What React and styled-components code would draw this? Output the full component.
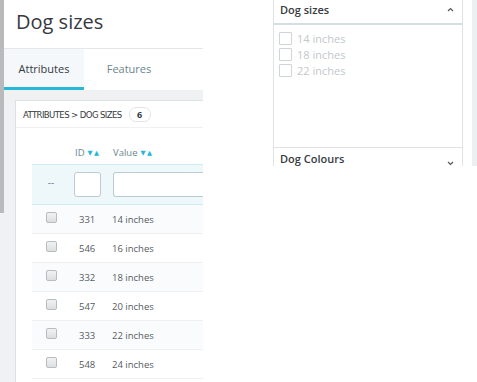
import React from 'react';
import styled, { createGlobalStyle } from 'styled-components';

const GlobalStyle = createGlobalStyle`
  html, body {
    margin: 0;
    padding: 0;
    background: #ffffff;
  }
  body {
    font-family: "Open Sans", "Liberation Sans", sans-serif;
    color: #363a41;
  }
`

const Page = styled.div`
  display: flex;
  align-items: flex-start;
  width: 477px;
  height: 382px;
  overflow: hidden;
`

const LeftPanel = styled.div`
  display: flex;
  width: 203px;
  height: 382px;
  overflow: hidden;
  background: #eff1f2;
`

const Edge = styled.div`
  width: 4px;
  flex-shrink: 0;
  display: flex;
  flex-direction: column;
`

const EdgeDark = styled.div`
  height: 213px;
  background: #b9babb;
`

const Main = styled.div`
  flex: 1;
  display: flex;
  flex-direction: column;
  min-width: 0;
`

const Header = styled.div`
  height: 48px;
  background: #fff;
  border-bottom: 1px solid #e4e6e8;
  padding-left: 12px;
  display: flex;
  align-items: center;
`

const Title = styled.h1`
  margin: 0;
  font-size: 20px;
  font-weight: 400;
  color: #363a41;
  margin-top: -6px;
`

const Tabs = styled.div`
  display: flex;
  height: 41px;
  background: #fff;
`

const Tab = styled.div`
  width: ${p => p.$w}px;
  display: flex;
  align-items: center;
  justify-content: center;
  font-size: 11px;
  color: ${p => (p.$active ? '#363a41' : '#6c868e')};
  background: ${p => (p.$active ? '#f4f8fa' : '#fff')};
  border-bottom: 3px solid ${p => (p.$active ? '#25b9d7' : 'transparent')};
  box-sizing: border-box;
`

const Content = styled.div`
  flex: 1;
  padding: 10px 0 0 11px;
`

const Card = styled.div`
  background: #fff;
  border: 1px solid #dbe2e5;
  border-right: none;
  height: 100%;
`

const CardHeader = styled.div`
  height: 26px;
  display: flex;
  align-items: center;
  gap: 7px;
  padding-left: 7px;
  border-bottom: 1px solid #eef0f1;
  font-family: "DejaVu Sans Condensed", "Liberation Sans", sans-serif;
  font-size: 9.5px;
  color: #363a41;
  letter-spacing: -0.6px;
`

const Badge = styled.span`
  display: inline-flex;
  align-items: center;
  justify-content: center;
  width: 20px;
  height: 13px;
  border-radius: 7px;
  border: 1px solid #e2e5e7;
  font-family: "Open Sans", sans-serif;
  font-weight: 700;
  font-size: 9px;
  letter-spacing: 0;
`

const Table = styled.div`
  margin-left: 16px;
  display: flex;
  flex-direction: column;
`

const HeadRow = styled.div`
  display: grid;
  grid-template-columns: 38px 43px 1fr;
  height: 36px;
  align-items: end;
  padding-bottom: 5px;
  box-sizing: border-box;
  font-size: 9.5px;
  color: #6c868e;
`

const HeadCell = styled.div`
  padding-left: ${p => p.$pl || 0}px;
  display: flex;
  align-items: center;
  gap: 3px;
`

const Arrows = styled.span`
  color: #25b9d7;
  font-size: 6.5px;
  letter-spacing: 1.5px;
  font-family: "DejaVu Sans", sans-serif;
`

const FilterRow = styled.div`
  display: grid;
  grid-template-columns: 38px 43px 1fr;
  height: 41px;
  align-items: center;
  background: #eef8fb;
  border-top: 1px solid #cdebf3;
  border-bottom: 1px solid #cdebf3;
  box-sizing: border-box;
  font-size: 10px;
  color: #6c868e;
`

const Dash = styled.div`
  text-align: center;
  margin-top: -6px;
`

const FilterInput = styled.div`
  height: 25px;
  width: ${p => (p.$w ? `${p.$w}px` : 'auto')};
  margin-left: ${p => p.$ml || 0}px;
  background: #fff;
  border: 1px solid #bbcdd2;
  border-right: ${p => (p.$open ? 'none' : '1px solid #bbcdd2')};
  border-radius: ${p => (p.$open ? '3px 0 0 3px' : '3px')};
  box-sizing: border-box;
`

const Row = styled.div`
  display: grid;
  grid-template-columns: 38px 43px 1fr;
  height: 29px;
  align-items: center;
  background: ${p => (p.$tint ? '#fafbfc' : '#fff')};
  border-bottom: 1px solid #eef0f2;
  box-sizing: border-box;
  font-size: 9.5px;
  color: #555b62;
`

const BoxCell = styled.div`
  display: flex;
  justify-content: center;
  margin-top: -4px;
`

const SmallBox = styled.span`
  width: 9px;
  height: 9px;
  border: 1px solid #b9bcbf;
  border-radius: 2px;
  background: linear-gradient(#f1f2f3, #dcdee0);
`

const IdCell = styled.div`
  padding-left: 9px;
`

const ValueCell = styled.div`
  margin-left: -1px;
`

const RightPanel = styled.div`
  margin-left: 70px;
  width: 190px;
  height: 166px;
  border-left: 1px solid #dfe3e5;
  border-right: 1px solid #dfe3e5;
  box-sizing: border-box;
  display: flex;
  flex-direction: column;
  overflow: hidden;
`

const FacetHeader = styled.div`
  height: ${p => p.$h}px;
  flex-shrink: 0;
  display: flex;
  align-items: ${p => (p.$thick ? 'center' : 'flex-end')};
  justify-content: space-between;
  padding: ${p => (p.$thick ? '0 8px 4px 6px' : '0 8px 0 6px')};
  font-size: 11px;
  font-weight: 600;
  color: #363a41;
  border-bottom: ${p => (p.$thick ? '2px solid #d5dde0' : 'none')};
  box-sizing: border-box;
`

const FacetBody = styled.div`
  height: 123px;
  flex-shrink: 0;
  padding: 5px 0 0 5px;
  border-bottom: 1px solid #dfe3e5;
  box-sizing: border-box;
  display: flex;
  flex-direction: column;
`

const Option = styled.label`
  display: flex;
  align-items: center;
  gap: 5px;
  height: 16px;
  font-size: 11px;
  color: #c3c8cb;
`

const OptionBox = styled.span`
  width: 11px;
  height: 11px;
  border: 1px solid #cfd4d7;
  border-radius: 1px;
  background: #fff;
`

const Strip = styled.div`
  margin-left: 9px;
  width: 5px;
  height: 166px;
  background: #eeeff0;
`

const Chevron = ({ up }) => (
  <svg width="7" height="5" viewBox="0 0 7 5">
    <path
      d={up ? 'M1 4 L3.5 1.5 L6 4' : 'M1 1 L3.5 3.5 L6 1'}
      fill="none"
      stroke="#555"
      strokeWidth="1.2"
    />
  </svg>
)

const rows = [
  { id: 331, value: '14 inches' },
  { id: 546, value: '16 inches' },
  { id: 332, value: '18 inches' },
  { id: 547, value: '20 inches' },
  { id: 333, value: '22 inches' },
  { id: 548, value: '24 inches' },
]

const options = ['14 inches', '18 inches', '22 inches']

const App = () => {
  return (
    <>
      <GlobalStyle />
      <Page>
        <LeftPanel>
          <Edge>
            <EdgeDark />
          </Edge>
          <Main>
            <Header>
              <Title>Dog sizes</Title>
            </Header>
            <Tabs>
              <Tab $active $w={80}>Attributes</Tab>
              <Tab $w={90}>Features</Tab>
            </Tabs>
            <Content>
              <Card>
                <CardHeader>
                  <span>ATTRIBUTES &gt; DOG SIZES</span>
                  <Badge>6</Badge>
                </CardHeader>
                <Table>
                  <HeadRow>
                    <div />
                    <HeadCell $pl={5}>ID <Arrows>▼▲</Arrows></HeadCell>
                    <HeadCell>Value <Arrows>▼▲</Arrows></HeadCell>
                  </HeadRow>
                  <FilterRow>
                    <Dash>--</Dash>
                    <FilterInput $w={27} $ml={4} />
                    <FilterInput $open />
                  </FilterRow>
                  {rows.map((r, i) => (
                    <Row key={r.id} $tint={i % 2 === 0}>
                      <BoxCell>
                        <SmallBox />
                      </BoxCell>
                      <IdCell>{r.id}</IdCell>
                      <ValueCell>{r.value}</ValueCell>
                    </Row>
                  ))}
                </Table>
              </Card>
            </Content>
          </Main>
        </LeftPanel>
        <RightPanel>
          <FacetHeader $h={25} $thick>
            <span>Dog sizes</span>
            <Chevron up />
          </FacetHeader>
          <FacetBody>
            {options.map(o => (
              <Option key={o}>
                <OptionBox />
                {o}
              </Option>
            ))}
          </FacetBody>
          <FacetHeader $h={18}>
            <span>Dog Colours</span>
            <Chevron />
          </FacetHeader>
        </RightPanel>
        <Strip />
      </Page>
    </>
  );
}

export default App;
